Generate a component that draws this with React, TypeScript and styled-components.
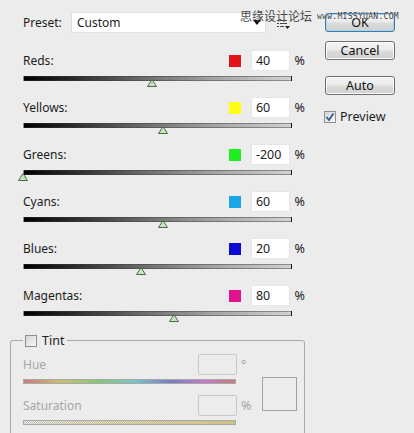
import React from "react";
import styled, { createGlobalStyle } from "styled-components";

const Global = createGlobalStyle`
  html, body { margin: 0; padding: 0; background: #ececec; }
  body {
    font-family: "Noto Sans", "Open Sans", sans-serif;
    font-size: 12px;
    color: #1c1c1c;
  }
  * { box-sizing: border-box; }
`;

const Page = styled.div`
  position: relative;
  width: 414px;
  height: 433px;
  overflow: hidden;
  display: flex;
  background: #ececec;
`;

const Main = styled.div`
  width: 305px;
  display: flex;
  flex-direction: column;
  padding-top: 12px;
`;

const PresetRow = styled.div`
  display: flex;
  align-items: center;
  height: 21px;
  margin-left: 23px;
`;

const PresetLabel = styled.span`
  width: 48px;
`;

const Select = styled.div`
  width: 195px;
  height: 21px;
  background: #fff;
  border: 1px solid #e0e0e0;
  display: flex;
  align-items: center;
  justify-content: space-between;
  padding: 0 4px 0 5px;
`;

const MenuIcon = styled.svg`
  margin-left: 11px;
  margin-top: 2px;
`;

const Rows = styled.div`
  margin-top: 17px;
  margin-left: 23px;
  display: flex;
  flex-direction: column;
`;

const Row = styled.div`
  height: 47px;
`;

const RowHead = styled.div`
  display: flex;
  align-items: center;
  height: 21px;
`;

const RowLabel = styled.span`
  width: 208px;
`;

const Swatch = styled.span<{ $color: string }>`
  width: 12px;
  height: 12px;
  margin-right: 10px;
  background: ${(p) => p.$color};
`;

const NumberBox = styled.div`
  width: 39px;
  height: 21px;
  background: #fff;
  border: 1px solid #e6e6e6;
  padding-left: 4px;
  display: flex;
  align-items: center;
  font-size: 12.5px;
`;

const Unit = styled.span`
  margin-left: 5px;
  font-size: 12.5px;
`;

const Track = styled.div`
  position: relative;
  margin-top: 5px;
  width: 269px;
  height: 5px;
  border: 1px solid rgba(60, 60, 60, 0.45);
  background: linear-gradient(
    to right,
    #000 0%,
    #2e2e2e 20%,
    #6c6c6c 45%,
    #a2a2a2 70%,
    #d2d2d2 100%
  );
`;

const Thumb = styled.svg`
  position: absolute;
  top: 2px;
`;

const Tint = styled.fieldset`
  margin: 0 0 0 10px;
  width: 295px;
  min-height: 130px;
  border: 1px solid #a9a9a9;
  border-radius: 3px;
  padding: 5px 0 0 12px;
`;

const TintLegend = styled.legend`
  display: flex;
  align-items: center;
  padding: 0 3px 0 2px;
  color: #222;
`;

const LegendText = styled.span`
  margin-left: 5px;
  font-size: 12.5px;
`;

const TintBody = styled.div`
  display: flex;
  align-items: flex-start;
`;

const Controls = styled.div`
  width: 230px;
  display: flex;
  flex-direction: column;
`;

const Field = styled.div<{ $gap?: number }>`
  margin-top: ${(p) => p.$gap ?? 0}px;
`;

const FieldHead = styled.div`
  display: flex;
  align-items: center;
  height: 21px;
`;

const FieldLabel = styled.span`
  flex: 1;
  color: #a6a6a6;
`;

const DisabledBox = styled.div`
  width: 39px;
  height: 21px;
  border: 1px solid #c9c9c9;
  border-radius: 2px;
  background: #ececec;
`;

const UnitSlot = styled.span`
  width: 12px;
  margin-left: 4px;
  color: #a6a6a6;
  font-size: 12.5px;
`;

const Spectrum = styled.div<{ $kind: "hue" | "sat" }>`
  margin-top: 4px;
  width: 213px;
  height: 5px;
  border: 1px solid #a8a8a8;
  background: repeating-conic-gradient(rgba(150, 150, 150, 0.55) 0 25%, transparent 0 50%) 0 0 / 2px 2px,
    ${(p) =>
      p.$kind === "hue"
        ? "linear-gradient(to right, #e07070, #e0d060 18%, #80d870 36%, #70d8d8 52%, #7070d8 70%, #d870d8 86%, #d87070)"
        : "linear-gradient(to right, #f0f0f0, #ece4b0 35%, #e2d27a 100%)"};
`;

const PreviewBox = styled.div`
  width: 35px;
  height: 34px;
  margin-left: 9px;
  margin-top: 23px;
  border: 1px solid #a0a0a0;
`;

const Side = styled.div`
  display: flex;
  flex-direction: column;
  align-items: flex-start;
  padding: 13px 0 0 20px;
`;

const Button = styled.div<{ $primary?: boolean; $gap: number }>`
  width: 70px;
  height: 19px;
  margin-top: ${(p) => p.$gap}px;
  border: 1px solid ${(p) => (p.$primary ? "#3d7bad" : "#707070")};
  border-radius: 3px;
  background: linear-gradient(#f3f3f3 0%, #ebebeb 48%, #dcdcdc 52%, #d0d0d0 100%);
  box-shadow: ${(p) => (p.$primary ? "inset 0 0 0 1px #a8d4ee" : "inset 0 0 0 1px #fbfbfb")};
  display: flex;
  align-items: center;
  justify-content: center;
  font-size: 12.5px;
  color: #111;
`;

const CheckRow = styled.label`
  display: flex;
  align-items: center;
  margin-top: 13px;
  margin-left: -1px;
`;

const Box = styled.span`
  width: 12px;
  height: 12px;
  border: 1px solid #8f8f8f;
  background: linear-gradient(135deg, #d6d6d6, #f8f8f8);
  display: flex;
  align-items: center;
  justify-content: center;
`;

const CheckText = styled.span`
  margin-left: 4px;
  font-size: 12.5px;
`;

const Watermark = styled.div`
  position: absolute;
  top: 7px;
  left: 240px;
  display: flex;
  align-items: center;
  pointer-events: none;
`;

const WatermarkCN = styled.span`
  font-family: "Noto Sans CJK SC", sans-serif;
  font-size: 12px;
  color: #4a4a4a;
`;

const WatermarkEN = styled.span`
  margin-left: 5px;
  margin-top: 2px;
  font-family: "DejaVu Sans Mono", monospace;
  font-size: 8px;
  color: #3a3a3a;
  text-shadow: 0 0 1px #fff;
  letter-spacing: 0.3px;
`;

const rows = [
  { name: "Reds", color: "#e01518", value: 40 },
  { name: "Yellows", color: "#ffff16", value: 60 },
  { name: "Greens", color: "#20ee20", value: -200 },
  { name: "Cyans", color: "#18a6e6", value: 60 },
  { name: "Blues", color: "#0b0bd2", value: 20 },
  { name: "Magentas", color: "#e0148c", value: 80 },
];

const MIN = -200;
const MAX = 300;
const TRACK_W = 269;

function Checkbox({ checked }: { checked?: boolean }) {
  return (
    <Box>
      {checked && (
        <svg width="10" height="10" viewBox="0 0 10 10">
          <path d="M1.5 5 L4 8 L8.5 1.5" fill="none" stroke="#3a5a9a" strokeWidth="1.8" />
        </svg>
      )}
    </Box>
  );
}

export default function App() {
  return (
    <Page>
      <Global />
      <Main>
        <PresetRow>
          <PresetLabel>Preset:</PresetLabel>
          <Select>
            <span>Custom</span>
            <svg width="8" height="5" viewBox="0 0 8 5">
              <path d="M0 0 H8 L4 5 Z" fill="#111" />
            </svg>
          </Select>
          <MenuIcon width="13" height="10" viewBox="0 0 13 10">
            <rect x="0" y="1" width="2" height="1" fill="#444" />
            <rect x="3" y="1" width="7" height="1" fill="#444" />
            <rect x="0" y="4" width="2" height="1" fill="#444" />
            <rect x="3" y="4" width="7" height="1" fill="#444" />
            <rect x="0" y="7" width="2" height="1" fill="#444" />
            <rect x="3" y="7" width="4" height="1" fill="#444" />
            <path d="M8 7 H13 L10.5 10 Z" fill="#222" />
          </MenuIcon>
        </PresetRow>
        <Rows>
          {rows.map((r) => {
            const center = ((r.value - MIN) / (MAX - MIN)) * TRACK_W;
            return (
              <Row key={r.name}>
                <RowHead>
                  <RowLabel>{r.name}:</RowLabel>
                  <Swatch $color={r.color} />
                  <NumberBox>{r.value}</NumberBox>
                  <Unit>%</Unit>
                </RowHead>
                <Track>
                  <Thumb width="10" height="8" viewBox="0 0 10 8" style={{ left: center - 6 }}>
                    <polygon points="5,0.5 9.5,7.5 0.5,7.5" fill="#c9e2c2" stroke="#4b6b4b" strokeWidth="1" />
                  </Thumb>
                </Track>
              </Row>
            );
          })}
        </Rows>
        <Tint>
          <TintLegend>
            <Checkbox />
            <LegendText>Tint</LegendText>
          </TintLegend>
          <TintBody>
            <Controls>
              <Field>
                <FieldHead>
                  <FieldLabel>Hue</FieldLabel>
                  <DisabledBox />
                  <UnitSlot>°</UnitSlot>
                </FieldHead>
                <Spectrum $kind="hue" />
              </Field>
              <Field $gap={11}>
                <FieldHead>
                  <FieldLabel>Saturation</FieldLabel>
                  <DisabledBox />
                  <UnitSlot>%</UnitSlot>
                </FieldHead>
                <Spectrum $kind="sat" />
              </Field>
            </Controls>
            <PreviewBox />
          </TintBody>
        </Tint>
      </Main>
      <Side>
        <Button $primary $gap={0}>OK</Button>
        <Button $gap={9}>Cancel</Button>
        <Button $gap={16}>Auto</Button>
        <CheckRow>
          <Checkbox checked />
          <CheckText>Preview</CheckText>
        </CheckRow>
      </Side>
      <Watermark>
        <WatermarkCN>思缘设计论坛</WatermarkCN>
        <WatermarkEN>www.MISSYUAN.COM</WatermarkEN>
      </Watermark>
    </Page>
  );
}
